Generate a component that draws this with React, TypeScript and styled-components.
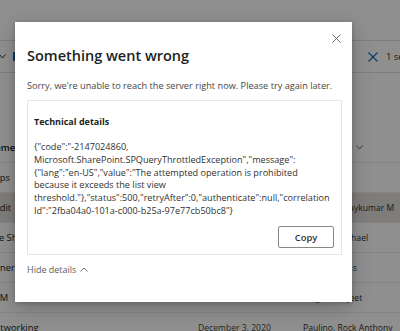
import React from "react";
import styled, { createGlobalStyle } from "styled-components";

const GlobalStyle = createGlobalStyle`
  html, body { margin: 0; padding: 0; }
  body {
    width: 400px;
    height: 331px;
    overflow: hidden;
    background: #ffffff;
    font-family: "Open Sans", "Noto Sans", Arial, sans-serif;
    color: #323130;
  }
`;

const Page = styled.div`
  position: relative;
  width: 400px;
  height: 331px;
  overflow: hidden;
  background: #ffffff;
`;

const TopBand = styled.div`
  height: 41px;
  border-bottom: 1px solid #e1dfdd;
  box-sizing: border-box;
`;

const Toolbar = styled.div`
  height: 32px;
  border-bottom: 1px solid #e1dfdd;
  box-sizing: border-box;
  display: flex;
  align-items: center;
  justify-content: space-between;
`;

const ToolLeft = styled.div`
  display: flex;
  align-items: center;
  gap: 7px;
  margin-left: -1px;
`;

const BlueMark = styled.div`
  width: 6px;
  height: 9px;
  background: #0f6cbd;
`;

const ToolRight = styled.div`
  display: flex;
  align-items: center;
  gap: 8px;
  width: 32px;
  flex: none;
  font-size: 9.4px;
  white-space: nowrap;
  color: #323130;
`;

const Icon = styled.svg`
  flex: none;
  display: block;
`;

const Spacer = styled.div`
  height: 60px;
`;

const Row = styled.div<{ $selected?: boolean; $strong?: boolean }>`
  display: grid;
  grid-template-columns: 198px 105px 97px;
  align-items: center;
  height: 30px;
  box-sizing: border-box;
  border-bottom: 1px solid #edebe9;
  background: ${(p) => (p.$selected ? "#e1dfdd" : "transparent")};
  font-size: 8.6px;
  font-weight: ${(p) => (p.$strong ? 600 : 400)};
  white-space: nowrap;
  overflow: hidden;
`;

const FirstCell = styled.div`
  margin-left: -12px;
  font-size: 9.4px;
  color: #201f1e;
`;

const DateCell = styled.div`
  color: #484644;
`;

const PersonCell = styled.div`
  display: flex;
  align-items: center;
  gap: 4px;
  color: #323130;
`;

const Overlay = styled.div`
  position: absolute;
  inset: 0;
  background: rgba(0, 0, 0, 0.44);
`;

const Dialog = styled.div`
  position: absolute;
  left: 15px;
  top: 22px;
  width: 337px;
  height: 280px;
  background: #ffffff;
  box-shadow: 0 6px 18px rgba(0, 0, 0, 0.22), 0 1px 4px rgba(0, 0, 0, 0.18);
  box-sizing: border-box;
  padding: 12px 10px 0 12px;
  display: flex;
  flex-direction: column;
`;

const CloseRow = styled.div`
  display: flex;
  justify-content: flex-end;
  height: 9px;
  padding-right: 1px;
`;

const CloseButton = styled.button`
  border: 0;
  background: none;
  padding: 0;
  width: 9px;
  height: 9px;
  display: flex;
  cursor: pointer;
`;

const Title = styled.h1`
  margin: 3px 0 0 0;
  font-size: 14.5px;
  line-height: 20px;
  font-weight: 600;
  color: #201f1e;
  white-space: nowrap;
`;

const Subtext = styled.p`
  margin: 12.5px 0 0 0;
  font-size: 9.2px;
  line-height: 13px;
  color: #484644;
  white-space: nowrap;
`;

const DetailsBox = styled.div`
  margin-top: 8.5px;
  border: 1px solid #e8e6e4;
  padding: 14px 7px 6px 6px;
  display: flex;
  flex-direction: column;
`;

const DetailsLabel = styled.div`
  font-size: 9px;
  line-height: 13px;
  font-weight: 700;
  color: #201f1e;
`;

const DetailsCode = styled.div`
  margin-top: 13px;
  font-size: 9.1px;
  line-height: 12.8px;
  color: #323130;
`;

const CodeLine = styled.div`
  white-space: nowrap;
`;

const ButtonRow = styled.div`
  display: flex;
  justify-content: flex-end;
  margin-top: 8.5px;
`;

const CopyButton = styled.button`
  width: 56px;
  height: 22px;
  border: 1px solid #8a8886;
  border-radius: 2px;
  background: #ffffff;
  font-family: inherit;
  font-size: 9.4px;
  font-weight: 600;
  color: #323130;
  padding: 0;
`;

const HideToggle = styled.button`
  margin-top: 7.5px;
  align-self: flex-start;
  border: 0;
  background: none;
  padding: 0;
  font-family: inherit;
  font-size: 9px;
  line-height: 13px;
  color: #605e5c;
  display: flex;
  align-items: center;
  gap: 4px;
`;

const rows = [
  { first: "Home", date: "", person: "Modified By", chevron: true, strong: true },
  { first: "Apps", date: "", person: "" },
  { first: "Audit", date: "", person: "Mathew, Vijaykumar M", selected: true },
  { first: "The Share", date: "", person: "Gomes, Raphael" },
  { first: "General", date: "", person: "Dias, Thomas" },
  { first: "CRM", date: "", person: "Singh, Manjeet" },
  { first: "Networking", date: "December 3, 2020", person: "Paulino, Rock Anthony" },
];

const codeLines = [
  '{"code":"-2147024860,',
  'Microsoft.SharePoint.SPQueryThrottledException","message":',
  '{"lang":"en-US","value":"The attempted operation is prohibited',
  "because it exceeds the list view",
  'threshold."},"status":500,"retryAfter":0,"authenticate":null,"correlation',
  'Id":"2fba04a0-101a-c000-b25a-97e77cb50bc8"}',
];

export default function App() {
  return (
    <>
      <GlobalStyle />
      <Page>
        <TopBand />
        <Toolbar>
          <ToolLeft>
            <Icon width="7" height="5" viewBox="0 0 7 5">
              <polyline points="0.5,0.5 3.5,4 6.5,0.5" fill="none" stroke="#323130" strokeWidth="1" />
            </Icon>
            <BlueMark />
          </ToolLeft>
          <ToolRight>
            <Icon width="10" height="10" viewBox="0 0 10 10">
              <path d="M0.5 0.5 L9.5 9.5 M9.5 0.5 L0.5 9.5" stroke="#0f6cbd" strokeWidth="1.1" />
            </Icon>
            <span>1 selected</span>
          </ToolRight>
        </Toolbar>
        <Spacer />
        {rows.map((r, i) => (
          <Row key={i} $selected={r.selected} $strong={r.strong}>
            <FirstCell>{r.first}</FirstCell>
            <DateCell>{r.date}</DateCell>
            <PersonCell>
              <span>{r.person}</span>
              {r.chevron && (
                <Icon width="7" height="5" viewBox="0 0 7 5">
                  <polyline points="0.5,0.5 3.5,4 6.5,0.5" fill="none" stroke="#605e5c" strokeWidth="0.9" />
                </Icon>
              )}
            </PersonCell>
          </Row>
        ))}
        <Overlay />
        <Dialog role="dialog">
          <CloseRow>
            <CloseButton aria-label="Close">
              <Icon width="9" height="9" viewBox="0 0 9 9">
                <path d="M0.5 0.5 L8.5 8.5 M8.5 0.5 L0.5 8.5" stroke="#605e5c" strokeWidth="0.9" />
              </Icon>
            </CloseButton>
          </CloseRow>
          <Title>Something went wrong</Title>
          <Subtext>Sorry, we're unable to reach the server right now. Please try again later.</Subtext>
          <DetailsBox>
            <DetailsLabel>Technical details</DetailsLabel>
            <DetailsCode>
              {codeLines.map((l, i) => (
                <CodeLine key={i}>{l}</CodeLine>
              ))}
            </DetailsCode>
            <ButtonRow>
              <CopyButton>Copy</CopyButton>
            </ButtonRow>
          </DetailsBox>
          <HideToggle>
            <span>Hide details</span>
            <Icon width="8" height="5" viewBox="0 0 8 5">
              <polyline points="0.5,4.5 4,1 7.5,4.5" fill="none" stroke="#605e5c" strokeWidth="0.9" />
            </Icon>
          </HideToggle>
        </Dialog>
      </Page>
    </>
  );
}
